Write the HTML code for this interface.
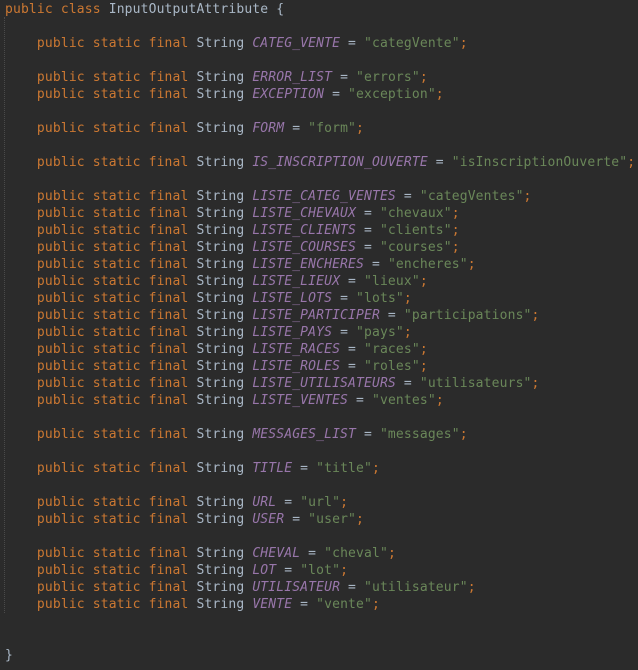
<!DOCTYPE html>
<html><head><style>
html,body{margin:0;padding:0;background:#2b2b2b;width:638px;height:670px;overflow:hidden}
pre{margin:0;padding:1px 0 0 5px;font:13px/17px "DejaVu Sans Mono","Liberation Mono",monospace;letter-spacing:0.15px;color:#a9b7c6;position:relative;top:0}
.k{color:#cc7832}.c{color:#9876aa;font-style:italic}.s{color:#6a8759}
.g{position:absolute;left:4px;top:17px;height:596px;border-left:1px dotted #4a4a4a}
</style></head><body>
<div class="g"></div>
<pre><span class="k">public class</span> InputOutputAttribute {

    <span class="k">public static final</span> String <span class="c">CATEG_VENTE</span> = <span class="s">"categVente"</span><span class="k">;</span>

    <span class="k">public static final</span> String <span class="c">ERROR_LIST</span> = <span class="s">"errors"</span><span class="k">;</span>
    <span class="k">public static final</span> String <span class="c">EXCEPTION</span> = <span class="s">"exception"</span><span class="k">;</span>

    <span class="k">public static final</span> String <span class="c">FORM</span> = <span class="s">"form"</span><span class="k">;</span>

    <span class="k">public static final</span> String <span class="c">IS_INSCRIPTION_OUVERTE</span> = <span class="s">"isInscriptionOuverte"</span><span class="k">;</span>

    <span class="k">public static final</span> String <span class="c">LISTE_CATEG_VENTES</span> = <span class="s">"categVentes"</span><span class="k">;</span>
    <span class="k">public static final</span> String <span class="c">LISTE_CHEVAUX</span> = <span class="s">"chevaux"</span><span class="k">;</span>
    <span class="k">public static final</span> String <span class="c">LISTE_CLIENTS</span> = <span class="s">"clients"</span><span class="k">;</span>
    <span class="k">public static final</span> String <span class="c">LISTE_COURSES</span> = <span class="s">"courses"</span><span class="k">;</span>
    <span class="k">public static final</span> String <span class="c">LISTE_ENCHERES</span> = <span class="s">"encheres"</span><span class="k">;</span>
    <span class="k">public static final</span> String <span class="c">LISTE_LIEUX</span> = <span class="s">"lieux"</span><span class="k">;</span>
    <span class="k">public static final</span> String <span class="c">LISTE_LOTS</span> = <span class="s">"lots"</span><span class="k">;</span>
    <span class="k">public static final</span> String <span class="c">LISTE_PARTICIPER</span> = <span class="s">"participations"</span><span class="k">;</span>
    <span class="k">public static final</span> String <span class="c">LISTE_PAYS</span> = <span class="s">"pays"</span><span class="k">;</span>
    <span class="k">public static final</span> String <span class="c">LISTE_RACES</span> = <span class="s">"races"</span><span class="k">;</span>
    <span class="k">public static final</span> String <span class="c">LISTE_ROLES</span> = <span class="s">"roles"</span><span class="k">;</span>
    <span class="k">public static final</span> String <span class="c">LISTE_UTILISATEURS</span> = <span class="s">"utilisateurs"</span><span class="k">;</span>
    <span class="k">public static final</span> String <span class="c">LISTE_VENTES</span> = <span class="s">"ventes"</span><span class="k">;</span>

    <span class="k">public static final</span> String <span class="c">MESSAGES_LIST</span> = <span class="s">"messages"</span><span class="k">;</span>

    <span class="k">public static final</span> String <span class="c">TITLE</span> = <span class="s">"title"</span><span class="k">;</span>

    <span class="k">public static final</span> String <span class="c">URL</span> = <span class="s">"url"</span><span class="k">;</span>
    <span class="k">public static final</span> String <span class="c">USER</span> = <span class="s">"user"</span><span class="k">;</span>

    <span class="k">public static final</span> String <span class="c">CHEVAL</span> = <span class="s">"cheval"</span><span class="k">;</span>
    <span class="k">public static final</span> String <span class="c">LOT</span> = <span class="s">"lot"</span><span class="k">;</span>
    <span class="k">public static final</span> String <span class="c">UTILISATEUR</span> = <span class="s">"utilisateur"</span><span class="k">;</span>
    <span class="k">public static final</span> String <span class="c">VENTE</span> = <span class="s">"vente"</span><span class="k">;</span>


}</pre>
</body></html>
